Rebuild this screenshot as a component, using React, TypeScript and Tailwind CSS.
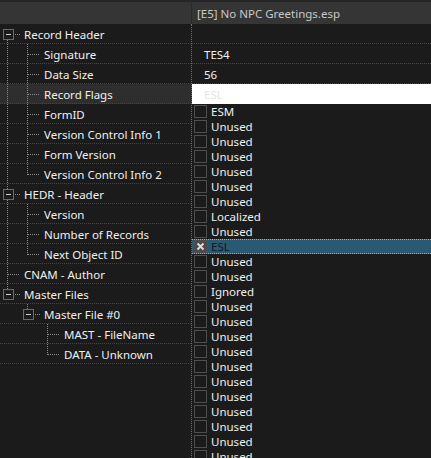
import React from 'react';

type Cell = { up?: boolean; down?: boolean; right?: boolean; box?: boolean };
type Node = { label: string; cells: Cell[]; selected?: boolean };

const p = { up: true, down: true };
const tee = { up: true, down: true, right: true };
const ell = { up: true, right: true };

const nodes: Node[] = [
  { label: 'Record Header', cells: [{ box: true, down: true, right: true }] },
  { label: 'Signature', cells: [p, tee] },
  { label: 'Data Size', cells: [p, tee] },
  { label: 'Record Flags', cells: [p, tee], selected: true },
  { label: 'FormID', cells: [p, tee] },
  { label: 'Version Control Info 1', cells: [p, tee] },
  { label: 'Form Version', cells: [p, tee] },
  { label: 'Version Control Info 2', cells: [p, ell] },
  { label: 'HEDR - Header', cells: [{ box: true, up: true, down: true, right: true }] },
  { label: 'Version', cells: [p, tee] },
  { label: 'Number of Records', cells: [p, tee] },
  { label: 'Next Object ID', cells: [p, ell] },
  { label: 'CNAM - Author', cells: [tee] },
  { label: 'Master Files', cells: [{ box: true, up: true, right: true }] },
  { label: 'Master File #0', cells: [{}, { box: true, up: true, right: true }] },
  { label: 'MAST - FileName', cells: [{}, {}, tee] },
  { label: 'DATA - Unknown', cells: [{}, {}, ell] },
];

const flags = [
  'ESM', 'Unused', 'Unused', 'Unused', 'Unused', 'Unused', 'Unused', 'Localized', 'Unused', 'ESL',
  'Unused', 'Unused', 'Ignored', 'Unused', 'Unused', 'Unused', 'Unused', 'Unused', 'Unused',
  'Unused', 'Unused', 'Unused', 'Unused', 'Unused',
];

function Guide({ cell }: { cell: Cell }) {
  const dot = { stroke: '#8a8a8a', strokeWidth: 1, strokeDasharray: '1 1', shapeRendering: 'crispEdges' as const };
  return (
    <svg width="20" height="20" className="shrink-0 self-start">
      {cell.up && <line x1="7.5" y1={0} x2="7.5" y2={cell.box ? 5 : 11} {...dot} />}
      {cell.down && <line x1="7.5" y1={cell.box ? 16 : 10} x2="7.5" y2={20} {...dot} />}
      {cell.right && <line x1={cell.box ? 15 : 8} y1="10.5" x2={20} y2="10.5" {...dot} />}
      {cell.box && (
        <g shapeRendering="crispEdges">
          <rect x="3.5" y="5.5" width="10" height="10" fill="#1c1c1c" stroke="#6a6a6a" />
          <line x1="6" y1="10.5" x2="11" y2="10.5" stroke="#d0d0d0" />
        </g>
      )}
    </svg>
  );
}

function CheckMark() {
  return (
    <svg width="9" height="9" viewBox="0 0 9 9">
      <path d="M1.5 1.5 L7.5 7.5 M7.5 1.5 L1.5 7.5" stroke="#dcdcdc" strokeWidth="2" />
    </svg>
  );
}

export default function App() {
  return (
    <div className="w-[431px] h-[458px] overflow-hidden bg-[#1b1b1b] text-[11.5px] text-[#f0f0f0] font-['Noto_Sans',sans-serif]">
      <div className="flex h-[24px] border-t-2 border-[#262626] bg-[#353535]">
        <div className="w-[192px] border-r border-[#2a2a2a]" />
        <div className="flex-1 pl-[5px] pt-[1px] leading-[22px] text-[#c8c8c8]">[E5] No NPC Greetings.esp</div>
      </div>

      <div className="flex h-[434px]">
        <div className="w-[192px] shrink-0 border-r border-dotted border-[#707070]">
          {nodes.map((n, i) => (
            <div
              key={i}
              className={`flex h-[20px] border-b border-dotted border-[#444] ${n.selected ? 'bg-[#2e2e2e]' : ''}`}
            >
              {n.cells.map((c, j) => (
                <Guide key={j} cell={c} />
              ))}
              <span className="pl-1 pt-[2px] leading-[17px] whitespace-nowrap">{n.label}</span>
            </div>
          ))}
        </div>

        <div className="flex-1 min-w-0">
          <div className="h-[20px] border-b border-dotted border-[#444]" />
          <div className="h-[20px] border-b border-dotted border-[#444] pl-[12px] pt-[2px] leading-[17px]">TES4</div>
          <div className="h-[20px] border-b border-dotted border-[#444] pl-[12px] pt-[2px] leading-[17px]">56</div>
          <div className="h-[20px] bg-white pl-[12px] pt-[1px] leading-[19px] text-[#e6e6e6]">ESL</div>

          <div className="flex flex-col">
            {flags.map((f, i) => {
              const on = f === 'ESL' && i === 9;
              return (
                <div
                  key={i}
                  className={`flex h-[15px] items-center gap-[4px] pl-[2px] shrink-0 ${
                    on ? 'bg-[#2a5a73] border-y border-dotted border-[#8ab0c4]' : ''
                  }`}
                >
                  <span
                    className={`flex h-[13px] w-[13px] shrink-0 items-center justify-center border border-[#4e4e4e] ${
                      on ? 'bg-[#4a4a4a]' : 'bg-[#1b1b1b]'
                    }`}
                  >
                    {on && <CheckMark />}
                  </span>
                  <span className={`pt-[1px] leading-[14px] ${on ? 'text-[#101820]' : ''}`}>{f}</span>
                </div>
              );
            })}
          </div>
        </div>
      </div>
    </div>
  );
}
